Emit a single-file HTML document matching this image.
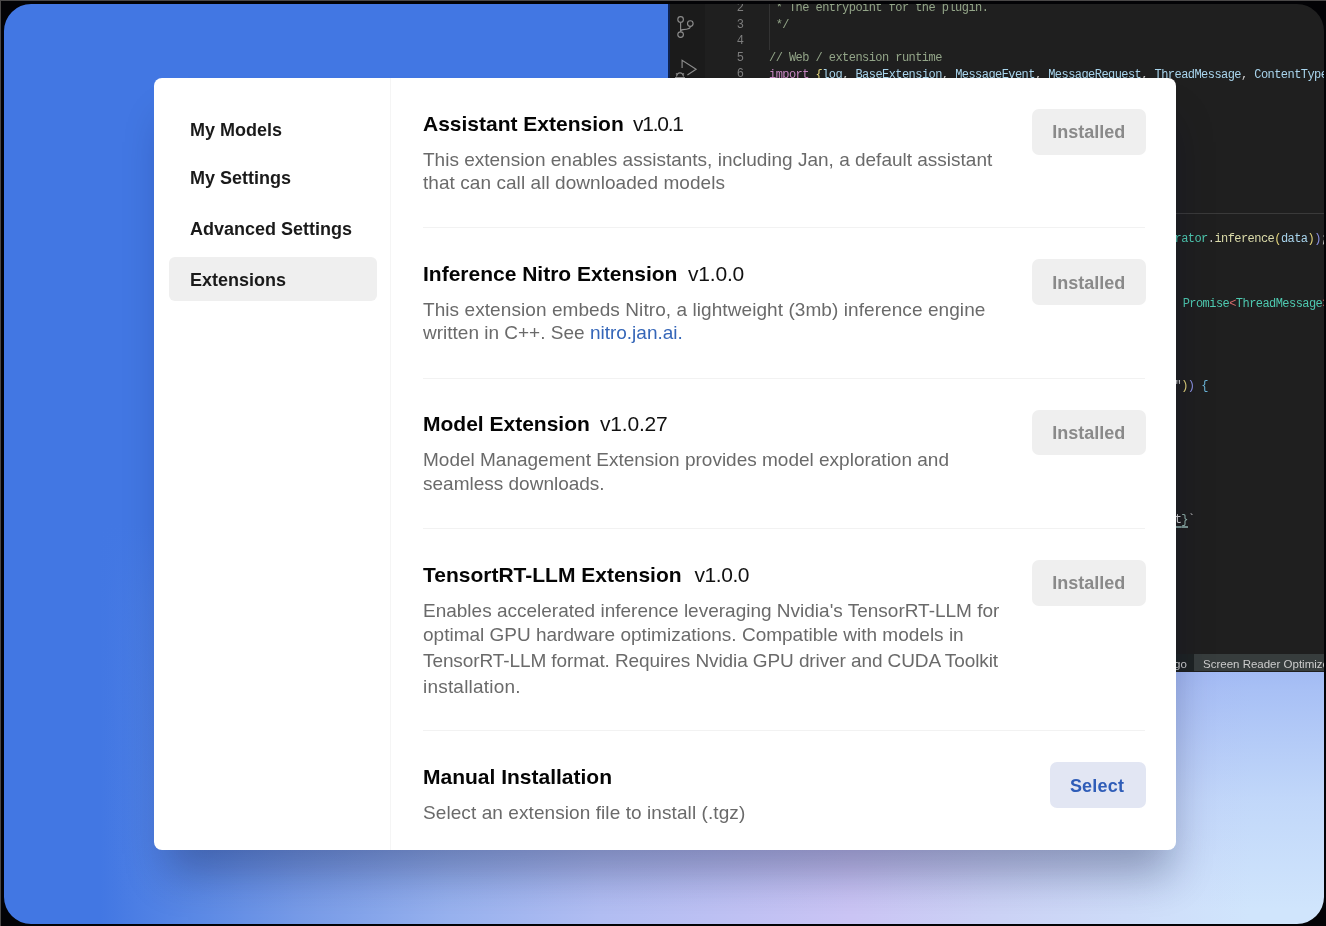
<!DOCTYPE html>
<html><head><meta charset="utf-8">
<style>
*{margin:0;padding:0;box-sizing:border-box}
html,body{width:1326px;height:926px;overflow:hidden;background:#030306}
body{position:relative;font-family:"Liberation Sans",sans-serif}
.t{position:absolute;white-space:pre}
.frame{position:absolute;left:4px;top:4px;width:1320px;height:920px;overflow:hidden}
.bg2{position:absolute;left:0;top:0;width:100%;height:100%;
 background:linear-gradient(to right,#4277e3 96px,#5c8ae6 196px,#779be8 296px,#98b2ef 446px,#b2bef3 596px,#cbc5f5 846px,#ccd3f6 996px,#d0e5fc 1246px)}
.ov1{position:absolute;left:0;top:0;width:1172px;height:100%;
 background:linear-gradient(to bottom,rgba(66,119,227,1) 0px,rgba(66,119,227,1) 520px,rgba(66,119,227,.55) 600px,rgba(66,119,227,.33) 686px,rgba(66,119,227,.12) 796px,rgba(66,119,227,0) 906px)}
.ov2{position:absolute;left:1172px;top:0;width:148px;height:100%;
 background:linear-gradient(to bottom,rgba(87,117,231,1) 0px,rgba(87,117,231,1) 520px,rgba(87,117,231,.55) 600px,rgba(87,117,231,.33) 686px,rgba(87,117,231,.12) 796px,rgba(87,117,231,0) 906px)}
.editor{position:absolute;left:664px;top:0;width:660px;height:667.5px;background:#1f1f1f;overflow:hidden;will-change:transform}
.abar{position:absolute;left:0;top:0;width:37px;height:100%;background:#1b1b1b}
.cl{position:absolute;font-family:"Liberation Mono",monospace;font-size:12px;line-height:12px;letter-spacing:-0.555px;white-space:pre;color:#cccccc}
.ln{position:absolute;left:62px;width:14px;text-align:right;font-family:"Liberation Mono",monospace;font-size:12px;line-height:12px;color:#7d7d7d}
.cm{color:#93a588}.kw{color:#c586c0}.vr{color:#a8d4ec}.fn{color:#dcdcaa}.ty{color:#4ec9b0}.st{color:#ce9178}
.b1{color:#e0d27a}.b2{color:#8a90e0}.b3{color:#d16969}.b4{color:#6ab4d8}
.guide{position:absolute;left:101px;top:0;width:1px;height:46px;background:#333}
.sticky{position:absolute;left:37px;top:209px;width:100%;height:1px;background:#3a3a3a}
.status{position:absolute;left:0;top:650.2px;width:100%;height:17.3px;background:#1e2323}
.sri{position:absolute;left:526px;top:0;width:200px;height:100%;background:#373d3d}
.modal{position:absolute;left:154px;top:78px;width:1022px;height:772px;background:#fff;border-radius:8px;
 box-shadow:4px 34px 40px -10px rgba(5,10,45,.3)}
.sideb{position:absolute;left:390px;top:78px;width:1px;height:772px;background:#f5f5f5}
.navsel{position:absolute;left:169px;top:257px;width:208px;height:44px;background:#efefef;border-radius:6px}
.btn{position:absolute;left:1031.5px;width:114.5px;height:45.5px;border-radius:7px;background:#efefef;color:#8a8a8a;font-weight:bold}
.btn.sel{background:#e2e6f3;color:#2f5db8;height:46px}
.sep{position:absolute;left:423px;width:722px;height:1px;background:#f2f2f2}
</style></head><body>
<div style="position:absolute;left:0;top:0;width:1326px;height:1px;background:#4b4949"></div>
<div style="position:absolute;left:0;top:0;width:1px;height:926px;background:#4b4949"></div>
<div class="frame">
 <div class="bg2"></div><div class="ov1"></div><div class="ov2"></div>
 <div class="editor">
  <div class="abar"></div><div style="position:absolute;left:0;top:0;width:1.5px;height:100%;background:#0e2250"></div>
  <div class="guide"></div>
  <svg style="position:absolute;left:0;top:-4px" width="40" height="82" viewBox="668 0 40 82" fill="none" stroke="#8c8c8c" stroke-width="1.15">
   <circle cx="680.6" cy="19.4" r="2.8"/><circle cx="690.3" cy="23.5" r="2.8"/><circle cx="680.6" cy="34.6" r="2.8"/>
   <path d="M680.6 22.2V31.8M690.3 26.3C690.3 28.3 688.8 29 686.5 29.2L683 29.6C681.4 29.8 680.6 30.5 680.6 31.8"/>
   <path d="M682.1 68V60.3L696.1 69.3L687.4 75"/>
   <path d="M676.5 76.5C677 74 678.5 72.8 680 72.8C681.5 72.8 683 74 683.5 76.5M676 73.5L677.5 74.8M684 73.5L682.5 74.8M675 77.5H685"/>
  </svg>
  <div class="sticky"></div>
<div class="ln" style="top:-1.79px">2</div>
<div class="ln" style="top:14.66px">3</div>
<div class="ln" style="top:31.11px">4</div>
<div class="ln" style="top:47.56px">5</div>
<div class="ln" style="top:64.01px">6</div>
<div class="cl" style="left:101px;top:-1.79px"><span class="cm"> * The entrypoint for the plugin.</span></div>
<div class="cl" style="left:101px;top:14.66px"><span class="cm"> */</span></div>
<div class="cl" style="left:101px;top:47.56px"><span class="cm">// Web / extension runtime</span></div>
<div class="cl" style="left:101px;top:65.49px"><span class="kw">import</span> <span class="b1">{</span><span class="vr">log</span>, <span class="vr">BaseExtension</span>, <span class="vr">MessageEvent</span>, <span class="vr">MessageRequest</span>, <span class="vr">ThreadMessage</span>, <span class="vr">ContentType</span></div>
<div class="cl" style="left:506.5px;top:228.51px"><span class="ty">rator</span>.<span class="fn">inference</span><span class="b1">(</span><span class="vr">data</span><span class="b1">)</span><span class="b2">)</span>;</div>
<div class="cl" style="left:508px;top:294.31px"> <span class="ty">Promise</span><span class="b3">&lt;</span><span class="ty">ThreadMessage</span><span class="b3">&gt;</span></div>
<div class="cl" style="left:506.5px;top:375.73px"><span style="color:#c8c8c8">"</span><span class="b1">)</span><span class="b2">)</span> <span class="b4">{</span></div>
<div class="cl" style="left:506.70000000000005px;top:509.64px"><span style="text-decoration:underline;text-decoration-color:#7a9590;text-decoration-thickness:1.5px;text-underline-offset:2.5px"><span style="color:#d8d8d8">t</span><span style="color:#8fb0a8">}</span></span><span style="color:#c8c8c8">`</span></div>

  <div class="status"><div class="sri"></div>
   <div class="t" style="left:506px;top:5px;font-size:11.5px;line-height:11.5px;color:#cccccc">go</div>
   <div class="t" style="left:535px;top:5px;font-size:11.5px;line-height:11.5px;color:#cccccc">Screen Reader Optimized</div>
  </div>
 </div>
</div>
<div class="modal"></div>
<div class="sideb"></div>
<div class="navsel"></div>
<div style="position:absolute;left:0;top:0;width:1326px;height:926px;will-change:transform">
<div class="sep" style="top:227px"></div><div class="sep" style="top:378px"></div><div class="sep" style="top:528px"></div><div class="sep" style="top:730px"></div>
<div class="btn" style="top:109px"><div class="t" style="left:0;width:100%;text-align:center;top:14.36px;font-size:18px;line-height:18px">Installed</div></div>
<div class="btn" style="top:259.3px"><div class="t" style="left:0;width:100%;text-align:center;top:14.36px;font-size:18px;line-height:18px">Installed</div></div>
<div class="btn" style="top:409.5px"><div class="t" style="left:0;width:100%;text-align:center;top:14.36px;font-size:18px;line-height:18px">Installed</div></div>
<div class="btn" style="top:560px"><div class="t" style="left:0;width:100%;text-align:center;top:14.36px;font-size:18px;line-height:18px">Installed</div></div>
<div class="btn sel" style="top:762px;left:1050px;width:96px"><div class="t" style="left:-1px;width:100%;text-align:center;top:14.56px;font-size:18px;line-height:18px;letter-spacing:0.2px">Select</div></div>

<div class="t" style="left:190px;top:120.56px;font-size:18px;line-height:18px;color:#1a1a1a;font-weight:bold;">My Models</div>
<div class="t" style="left:190px;top:169.16px;font-size:18px;line-height:18px;color:#1a1a1a;font-weight:bold;">My Settings</div>
<div class="t" style="left:190px;top:220.06px;font-size:18px;line-height:18px;color:#1a1a1a;font-weight:bold;">Advanced Settings</div>
<div class="t" style="left:190px;top:271.16px;font-size:18px;line-height:18px;color:#1a1a1a;font-weight:bold;">Extensions</div>
<div class="t" style="left:423px;top:113.02px;font-size:21px;line-height:21px;color:#050505;font-weight:bold;">Assistant Extension</div>
<div class="t" style="left:633px;top:113.02px;font-size:21px;line-height:21px;color:#111;letter-spacing:-1.25px;">v1.0.1</div>
<div class="t" style="left:423px;top:149.62px;font-size:19px;line-height:19px;color:#6a6a6a;">This extension enables assistants, including Jan, a default assistant</div>
<div class="t" style="left:423px;top:173.42px;font-size:19px;line-height:19px;color:#6a6a6a;letter-spacing:0.06px;">that can call all downloaded models</div>
<div class="t" style="left:423px;top:263.42px;font-size:21px;line-height:21px;color:#050505;font-weight:bold;">Inference Nitro Extension</div>
<div class="t" style="left:688px;top:263.42px;font-size:21px;line-height:21px;color:#111;letter-spacing:-0.2px;">v1.0.0</div>
<div class="t" style="left:423px;top:299.62px;font-size:19px;line-height:19px;color:#6a6a6a;letter-spacing:0.074px;">This extension embeds Nitro, a lightweight (3mb) inference engine</div>
<div class="t" style="left:423px;top:323.42px;font-size:19px;line-height:19px;color:#6a6a6a;">written in C++. See <span style="color:#3566b8">nitro.jan.ai.</span></div>
<div class="t" style="left:423px;top:413.32px;font-size:21px;line-height:21px;color:#050505;font-weight:bold;">Model Extension</div>
<div class="t" style="left:600px;top:413.32px;font-size:21px;line-height:21px;color:#111;letter-spacing:-0.2px;">v1.0.27</div>
<div class="t" style="left:423px;top:450.02px;font-size:19px;line-height:19px;color:#6a6a6a;">Model Management Extension provides model exploration and</div>
<div class="t" style="left:423px;top:473.92px;font-size:19px;line-height:19px;color:#6a6a6a;">seamless downloads.</div>
<div class="t" style="left:423px;top:564.22px;font-size:21px;line-height:21px;color:#050505;font-weight:bold;">TensortRT-LLM Extension</div>
<div class="t" style="left:694.5px;top:564.22px;font-size:21px;line-height:21px;color:#111;letter-spacing:-0.45px;">v1.0.0</div>
<div class="t" style="left:423px;top:600.62px;font-size:19px;line-height:19px;color:#6a6a6a;">Enables accelerated inference leveraging Nvidia's TensorRT-LLM for</div>
<div class="t" style="left:423px;top:624.62px;font-size:19px;line-height:19px;color:#6a6a6a;">optimal GPU hardware optimizations. Compatible with models in</div>
<div class="t" style="left:423px;top:650.52px;font-size:19px;line-height:19px;color:#6a6a6a;letter-spacing:-0.095px;">TensorRT-LLM format. Requires Nvidia GPU driver and CUDA Toolkit</div>
<div class="t" style="left:423px;top:676.92px;font-size:19px;line-height:19px;color:#6a6a6a;letter-spacing:0.2px;">installation.</div>
<div class="t" style="left:423px;top:765.92px;font-size:21px;line-height:21px;color:#050505;font-weight:bold;">Manual Installation</div>
<div class="t" style="left:423px;top:803.02px;font-size:19px;line-height:19px;color:#6a6a6a;letter-spacing:0.08px;">Select an extension file to install (.tgz)</div>

</div>
<svg style="position:absolute;left:0;top:0" width="1326" height="926" viewBox="0 0 1326 926">
 <path fill="#030306" d="M4 4H31A27 27 0 0 0 4 31Z"/>
 <path fill="#030306" d="M1324 4H1297A27 27 0 0 1 1324 31Z"/>
 <path fill="#030306" d="M4 924H31A27 27 0 0 1 4 897Z"/>
 <path fill="#030306" d="M1324 924H1297A27 27 0 0 0 1324 897Z"/>
</svg>
</body></html>
